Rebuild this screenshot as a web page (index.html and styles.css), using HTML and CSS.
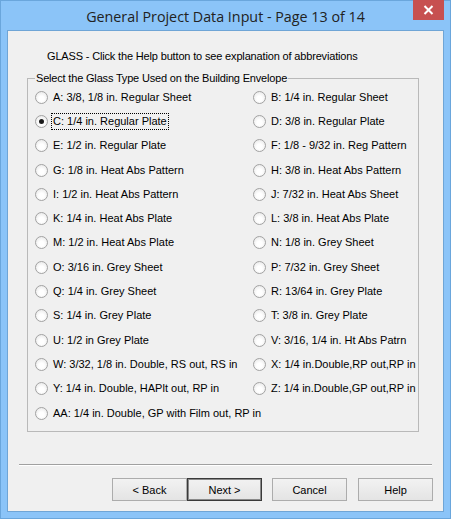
FILE: index.html
```html
<!DOCTYPE html>
<html>
<head>
<meta charset="utf-8">
<link rel="stylesheet" href="styles.css">
</head>
<body>
<div class="window">
  <div class="titlebar">
    <span class="title">General Project Data Input - Page 13 of 14</span>
    <span class="close"><svg width="11" height="10" viewBox="0 0 11 10"><path d="M1.5 1 L9.5 9 M9.5 1 L1.5 9" stroke="#fff" stroke-width="2"/></svg></span>
  </div>
  <div class="client">
    <div class="intro">GLASS - Click the Help button to see explanation of abbreviations</div>
    <fieldset class="group">
      <legend>Select the Glass Type Used on the Building Envelope</legend>
      <div class="grid">
        <div class="opt"><span class="radio"></span><span class="lbl">A: 3/8, 1/8 in. Regular Sheet</span></div>
        <div class="opt"><span class="radio"></span><span class="lbl">B: 1/4 in. Regular Sheet</span></div>
        <div class="opt"><span class="radio checked"></span><span class="lbl focus">C: 1/4 in. Regular Plate</span></div>
        <div class="opt"><span class="radio"></span><span class="lbl">D: 3/8 in. Regular Plate</span></div>
        <div class="opt"><span class="radio"></span><span class="lbl">E: 1/2 in. Regular Plate</span></div>
        <div class="opt"><span class="radio"></span><span class="lbl">F: 1/8 - 9/32 in. Reg Pattern</span></div>
        <div class="opt"><span class="radio"></span><span class="lbl">G: 1/8 in. Heat Abs Pattern</span></div>
        <div class="opt"><span class="radio"></span><span class="lbl">H: 3/8 in. Heat Abs Pattern</span></div>
        <div class="opt"><span class="radio"></span><span class="lbl">I: 1/2 in. Heat Abs Pattern</span></div>
        <div class="opt"><span class="radio"></span><span class="lbl">J: 7/32 in. Heat Abs Sheet</span></div>
        <div class="opt"><span class="radio"></span><span class="lbl">K: 1/4 in. Heat Abs Plate</span></div>
        <div class="opt"><span class="radio"></span><span class="lbl">L: 3/8 in. Heat Abs Plate</span></div>
        <div class="opt"><span class="radio"></span><span class="lbl">M: 1/2 in. Heat Abs Plate</span></div>
        <div class="opt"><span class="radio"></span><span class="lbl">N: 1/8 in. Grey Sheet</span></div>
        <div class="opt"><span class="radio"></span><span class="lbl">O: 3/16 in. Grey Sheet</span></div>
        <div class="opt"><span class="radio"></span><span class="lbl">P: 7/32 in. Grey Sheet</span></div>
        <div class="opt"><span class="radio"></span><span class="lbl">Q: 1/4 in. Grey Sheet</span></div>
        <div class="opt"><span class="radio"></span><span class="lbl">R: 13/64 in. Grey Plate</span></div>
        <div class="opt"><span class="radio"></span><span class="lbl">S: 1/4 in. Grey Plate</span></div>
        <div class="opt"><span class="radio"></span><span class="lbl">T: 3/8 in. Grey Plate</span></div>
        <div class="opt"><span class="radio"></span><span class="lbl">U: 1/2 in Grey Plate</span></div>
        <div class="opt"><span class="radio"></span><span class="lbl">V: 3/16, 1/4 in. Ht Abs Patrn</span></div>
        <div class="opt"><span class="radio"></span><span class="lbl">W: 3/32, 1/8 in. Double, RS out, RS in</span></div>
        <div class="opt"><span class="radio"></span><span class="lbl">X: 1/4 in.Double,RP out,RP in</span></div>
        <div class="opt"><span class="radio"></span><span class="lbl">Y: 1/4 in. Double, HAPlt out, RP in</span></div>
        <div class="opt"><span class="radio"></span><span class="lbl">Z: 1/4 in.Double,GP out,RP in</span></div>
        <div class="opt wide"><span class="radio"></span><span class="lbl">AA: 1/4 in. Double, GP with Film out, RP in</span></div>
      </div>
    </fieldset>
    <div class="sep"></div>
    <div class="buttons">
      <button class="btn">&lt; Back</button>
      <button class="btn default">Next &gt;</button>
      <button class="btn gap1">Cancel</button>
      <button class="btn gap2">Help</button>
    </div>
  </div>
</div>
</body>
</html>
```
FILE: styles.css
```css
html, body {
  margin: 0;
  padding: 0;
}
body {
  width: 451px;
  height: 519px;
  overflow: hidden;
  font-family: "Liberation Sans", Arial, sans-serif;
  font-size: 11px;
  color: #000;
}
.window {
  box-sizing: border-box;
  width: 451px;
  height: 519px;
  background: #8bc4f8;
  border: 1px solid #6aa6dc;
  display: flex;
  flex-direction: column;
}
.titlebar {
  height: 29px;
  position: relative;
  display: flex;
  align-items: center;
  justify-content: center;
}
.title {
  font-family: "Open Sans", "Noto Sans", sans-serif;
  font-size: 14.3px;
  color: #222;
  margin-top: 1px;
}
.close {
  position: absolute;
  right: 6px;
  top: -1px;
  width: 31px;
  height: 20px;
  background: #c75050;
  display: flex;
  align-items: center;
  justify-content: center;
}
.client {
  box-sizing: border-box;
  margin: 0 6px 6px 6px;
  flex: 1;
  background: #f0f0f0;
  border: 1px solid #6fa5d6;
  display: flex;
  flex-direction: column;
}
.intro {
  margin: 19px 0 0 39px;
  height: 13px;
  line-height: 13px;
  letter-spacing: -0.16px;
}
.group {
  box-sizing: border-box;
  margin: 9px 0 0 19px;
  width: 392px;
  padding: 0 0 6px 7px;
  border: 1px solid #b9b9b9;
  min-width: 0;
}
.group legend {
  margin-left: 0;
  padding: 0 1px;
  line-height: 13px;
  height: 13px;
  letter-spacing: -0.18px;
}
.grid {
  display: grid;
  grid-template-columns: 218px 1fr;
  grid-auto-rows: 24.3px;
}
.opt {
  display: flex;
  align-items: center;
  white-space: nowrap;
}
.opt.wide {
  grid-column: 1 / span 2;
}
.radio {
  box-sizing: border-box;
  width: 13px;
  height: 13px;
  border-radius: 50%;
  border: 1px solid #a2a2a2;
  background: radial-gradient(circle at 50% 60%, #ffffff 30%, #e2e2e2 100%);
  display: flex;
  align-items: center;
  justify-content: center;
  flex: none;
}
.radio.checked::after {
  content: "";
  width: 5px;
  height: 5px;
  border-radius: 50%;
  background: #1a1a1a;
}
.lbl {
  margin-left: 3px;
  padding: 1px 1px;
  line-height: 13px;
  border: 1px solid transparent;
}
.lbl.focus {
  border: 1px dotted #000;
}
.sep {
  margin: 32px 0 0 11px;
  width: 413px;
  border-top: 1px solid #a0a0a0;
  border-bottom: 1px solid #ffffff;
}
.buttons {
  display: flex;
  margin: 12px 0 0 104px;
}
.btn {
  box-sizing: border-box;
  width: 75px;
  height: 23px;
  font-family: "Liberation Sans", Arial, sans-serif;
  font-size: 11px;
  color: #000;
  background: linear-gradient(#f2f2f2, #e4e4e4);
  border: 1px solid #acacac;
  padding: 0;
  margin: 0;
}
.btn.default {
  border: 1px solid #3a3a3a;
  box-shadow: inset 0 0 0 1px #8a8a8a;
}
.gap1 {
  margin-left: 10px;
}
.gap2 {
  margin-left: 11px;
}
```
